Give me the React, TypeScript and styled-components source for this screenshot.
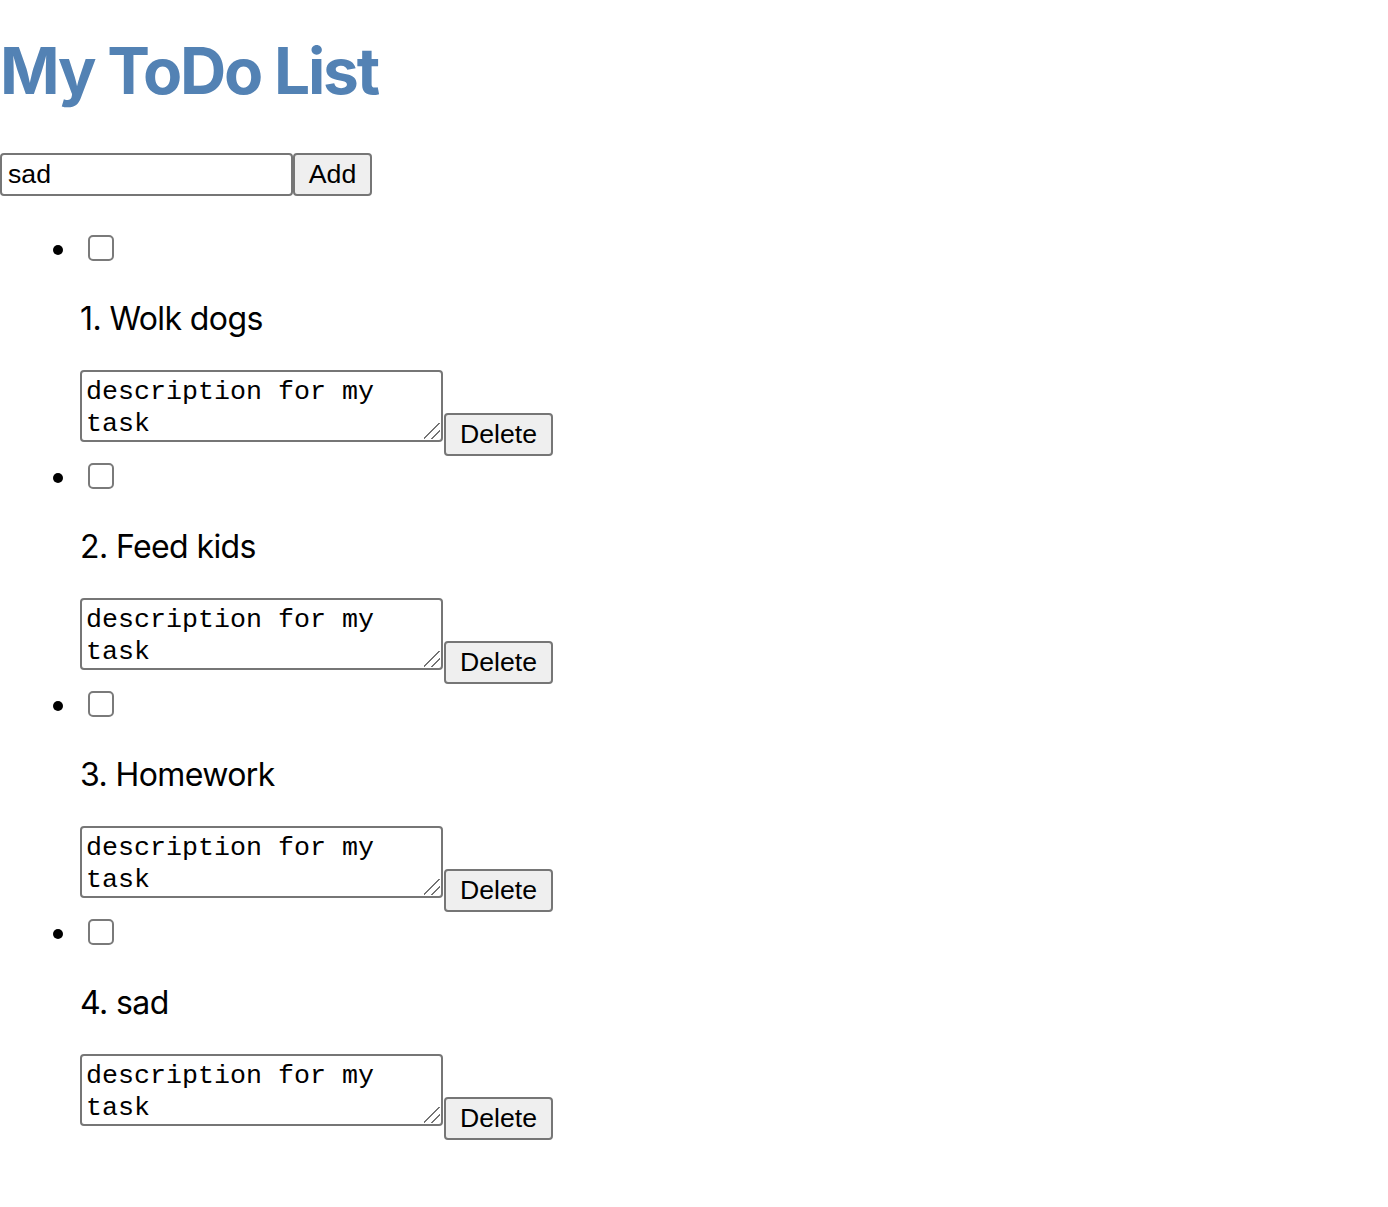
import React, { useState } from 'react';
import styled, { createGlobalStyle } from 'styled-components';

const GlobalStyle = createGlobalStyle`
  html, body {
    margin: 0;
    padding: 0;
    background: #fff;
  }
  body {
    font-family: 'Inter', 'Liberation Sans', sans-serif;
    color: #000;
  }
`;

const Title = styled.h1`
  margin: 32px 0 44px;
  font-family: 'Inter', sans-serif;
  font-size: 64px;
  line-height: 77px;
  font-weight: 700;
  color: #5382b4;
  letter-spacing: -2.2px;
`;

const AddForm = styled.form`
  display: flex;
  height: 43px;
`;

const baseControl = `
  box-sizing: border-box;
  border: 2px solid #767676;
  border-radius: 4px;
  font-family: 'Liberation Sans', Arial, sans-serif;
  font-size: 26.67px;
  color: #000;
  margin: 0;
`;

const TaskInput = styled.input`
  ${baseControl}
  width: 293px;
  height: 43px;
  padding: 2px 6px;
  outline: none;
`;

const Button = styled.button<{ $width: number }>`
  ${baseControl}
  width: ${(p) => p.$width}px;
  height: 43px;
  padding: 0;
  background: #efefef;
  cursor: pointer;
`;

const List = styled.ul`
  margin: 32px 0 0;
  padding-left: 80px;
  list-style: disc;
  font-size: 32px;
  line-height: 42px;
`;

const Item = styled.li``;

const CheckRow = styled.div`
  height: 34px;
  line-height: 42px;
`;

const Check = styled.input`
  appearance: none;
  -webkit-appearance: none;
  box-sizing: border-box;
  width: 26px;
  height: 26px;
  margin: 7px 0 0 8px;
  border: 2px solid #7a7a7a;
  border-radius: 5px;
  background: #fff;
  vertical-align: top;
  cursor: pointer;

  &:checked {
    background: #0075ff;
    border-color: #0075ff;
  }
`;

const TaskName = styled.p`
  margin: 38px 0 33px;
  font-size: 32px;
  line-height: 37px;
  letter-spacing: -0.6px;
`;

const DescRow = styled.div`
  display: flex;
  align-items: flex-start;
  gap: 1px;
  height: 86px;
`;

const Description = styled.textarea`
  box-sizing: border-box;
  width: 363px;
  height: 72px;
  margin: 0;
  padding: 4px 4px 0;
  border: 2px solid #767676;
  border-radius: 4px;
  font-family: 'Liberation Mono', 'Courier New', monospace;
  font-size: 26.67px;
  line-height: 32px;
  color: #000;
  outline: none;
  resize: none;
  overflow: hidden;
  background:
    linear-gradient(
        -45deg,
        transparent 5.5px,
        #737373 5.5px,
        #737373 7px,
        transparent 7px,
        transparent 11px,
        #737373 11px,
        #737373 12.5px,
        transparent 12.5px
      )
      right 1px bottom 1px / 16px 16px no-repeat,
    #fff;
`;

const DeleteButton = styled(Button)`
  margin-top: 43px;
`;

type Todo = { id: number; name: string; description: string; done: boolean };

export default function App() {
  const [text, setText] = useState('sad');
  const [todos, setTodos] = useState<Todo[]>([
    { id: 1, name: 'Wolk dogs', description: 'description for my task', done: false },
    { id: 2, name: 'Feed kids', description: 'description for my task', done: false },
    { id: 3, name: 'Homework', description: 'description for my task', done: false },
    { id: 4, name: 'sad', description: 'description for my task', done: false },
  ]);

  const add = (e: React.FormEvent) => {
    e.preventDefault();
    if (!text.trim()) return;
    setTodos([...todos, { id: Date.now(), name: text, description: 'description for my task', done: false }]);
  };

  const update = (id: number, patch: Partial<Todo>) =>
    setTodos(todos.map((t) => (t.id === id ? { ...t, ...patch } : t)));

  return (
    <>
      <GlobalStyle />
      <Title>My ToDo List</Title>
      <AddForm onSubmit={add}>
        <TaskInput value={text} onChange={(e) => setText(e.target.value)} />
        <Button $width={79} type="submit">Add</Button>
      </AddForm>
      <List>
        {todos.map((t, i) => (
          <Item key={t.id}>
            <CheckRow>
              <Check type="checkbox" checked={t.done} onChange={(e) => update(t.id, { done: e.target.checked })} />
            </CheckRow>
            <TaskName>{i + 1}. {t.name}</TaskName>
            <DescRow>
              <Description
                value={t.description}
                onChange={(e) => update(t.id, { description: e.target.value })}
              />
              <DeleteButton $width={109} onClick={() => setTodos(todos.filter((x) => x.id !== t.id))}>
                Delete
              </DeleteButton>
            </DescRow>
          </Item>
        ))}
      </List>
    </>
  );
}
